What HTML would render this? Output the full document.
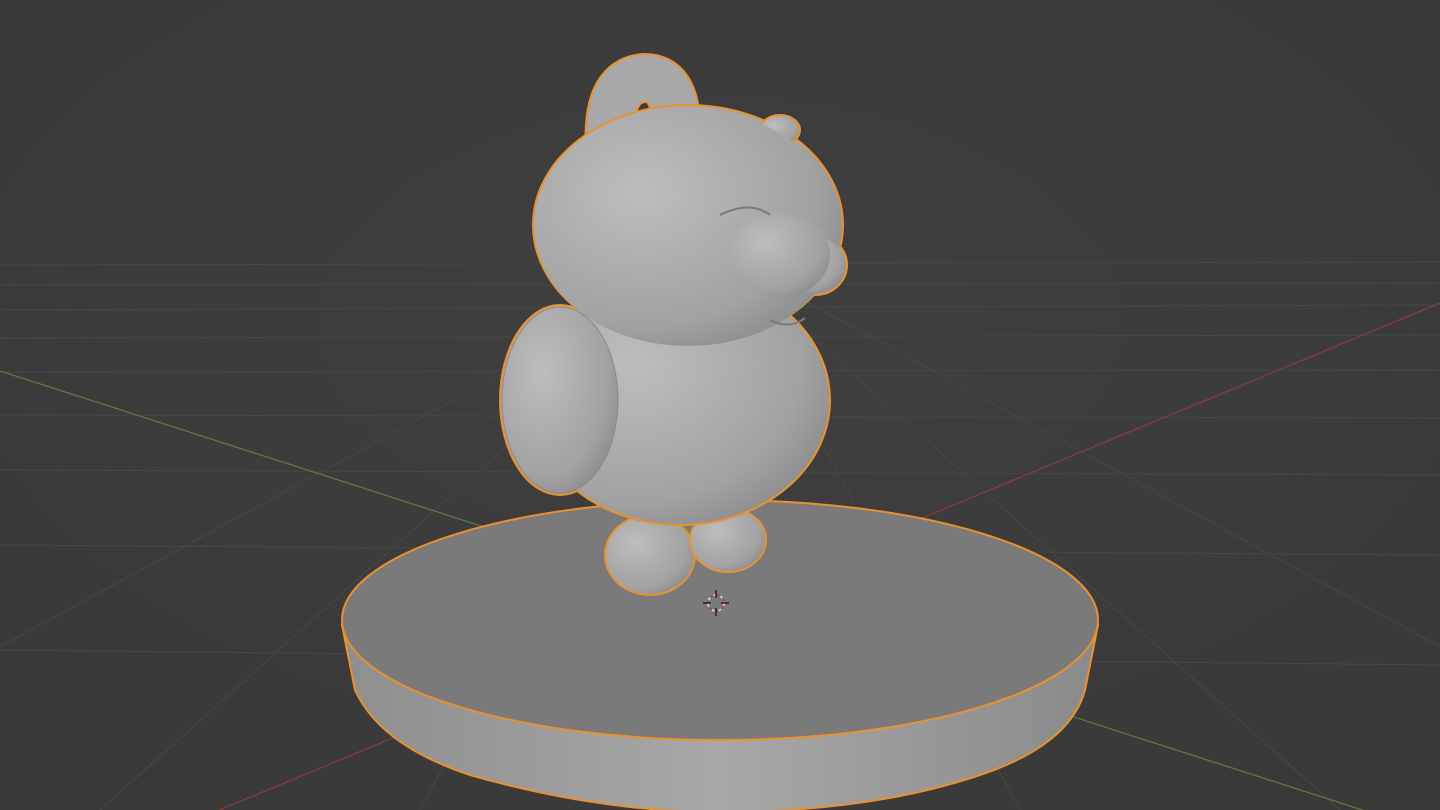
<!DOCTYPE html>
<html><head><meta charset="utf-8"><style>html,body{margin:0;padding:0;background:#3d3d3d;overflow:hidden}svg{display:block}</style></head>
<body>
<svg width="1440" height="810" viewBox="0 0 1440 810" xmlns="http://www.w3.org/2000/svg">
<defs>
<radialGradient id="bg" cx="0.5" cy="0.4" r="0.7"><stop offset="0" stop-color="#3f3f3f"/><stop offset="1" stop-color="#393939"/></radialGradient>
<radialGradient id="fur" cx="0.35" cy="0.35" r="0.8"><stop offset="0" stop-color="#bdbdbd"/><stop offset="0.7" stop-color="#a2a2a2"/><stop offset="1" stop-color="#858585"/></radialGradient>
<linearGradient id="side" x1="0" x2="1"><stop offset="0" stop-color="#8e8e8e"/><stop offset="0.5" stop-color="#a8a8a8"/><stop offset="1" stop-color="#8a8a8a"/></linearGradient>
</defs>
<rect width="1440" height="810" fill="url(#bg)"/>
<g stroke="#474747" stroke-width="1" fill="none">
<path d="M0 265 L1440 262"/><path d="M0 285 L1440 283"/><path d="M0 310 L1440 305"/>
<path d="M0 338 L1440 335"/><path d="M0 372 L1440 370"/><path d="M0 415 L1440 418"/>
<path d="M0 470 L1440 475"/><path d="M0 545 L1440 555"/><path d="M0 650 L1440 665"/>
<path d="M720 255 L-300 810"/><path d="M720 255 L100 810"/><path d="M720 255 L420 810"/>
<path d="M720 255 L720 810"/><path d="M720 255 L1020 810"/><path d="M720 255 L1340 810"/><path d="M720 255 L1740 810"/>
</g>
<path d="M0 371 L1440 835" stroke="#5a7a3a" stroke-width="1.3"/>
<path d="M1440 303 L200 818" stroke="#8a3a3a" stroke-width="1.3"/>
<path d="M342 625 L355 690 Q380 745 470 775 Q600 812 720 812 Q870 812 980 775 Q1070 745 1085 690 L1098 625 Z" fill="url(#side)" stroke="#e8922e" stroke-width="2"/>
<ellipse cx="720" cy="620" rx="378" ry="120" fill="#7a7a7a" stroke="#e8922e" stroke-width="2"/>
<path d="M612 172 Q600 80 645 78 Q675 78 676 125" fill="none" stroke="#e8922e" stroke-width="50" stroke-linecap="round"/>
<path d="M612 172 Q600 80 645 78 Q675 78 676 125" fill="none" stroke="#a8a8a8" stroke-width="46" stroke-linecap="round"/>
<g stroke="#e8922e" stroke-width="2" fill="url(#fur)">
<ellipse cx="650" cy="555" rx="45" ry="40"/>
<ellipse cx="728" cy="540" rx="38" ry="32"/>
<ellipse cx="680" cy="400" rx="150" ry="125"/>
<ellipse cx="688" cy="225" rx="155" ry="120"/>
<ellipse cx="780" cy="130" rx="20" ry="15"/>
<ellipse cx="815" cy="265" rx="32" ry="30"/>
<ellipse cx="560" cy="400" rx="60" ry="95"/>
</g>
<g fill="url(#fur)">
<ellipse cx="680" cy="400" rx="148" ry="123"/>
<ellipse cx="688" cy="228" rx="153" ry="118"/>
<ellipse cx="560" cy="400" rx="58" ry="93"/>
<ellipse cx="815" cy="265" rx="30" ry="28"/>
<ellipse cx="780" cy="255" rx="50" ry="42"/>
</g>
<ellipse cx="560" cy="400" rx="58" ry="93" fill="none" stroke="#8a8a8a" stroke-width="1"/>
<path d="M720 215 Q750 200 770 215" stroke="#7a7a7a" stroke-width="2" fill="none"/>
<path d="M770 320 Q790 330 805 318" stroke="#7a7a7a" stroke-width="2" fill="none"/>
<g transform="translate(716,603)">
<circle r="8" fill="none" stroke="#e0e0e0" stroke-width="1.5" stroke-dasharray="4 3"/>
<circle r="8" fill="none" stroke="#c03030" stroke-width="1.5" stroke-dasharray="3 4" stroke-dashoffset="4"/>
<path d="M0 -13 V-5 M0 5 V13 M-13 0 H-5 M5 0 H13" stroke="#222" stroke-width="1.5"/>
</g>
</svg>
</body></html>
